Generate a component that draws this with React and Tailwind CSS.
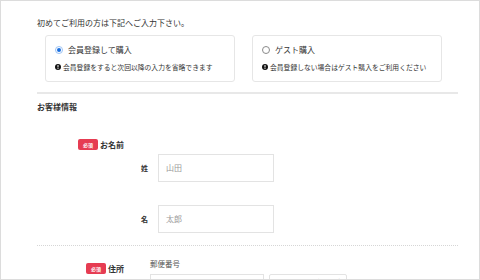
import React from 'react';

const InfoIcon = () => (
  <svg className="w-[6px] h-[6px] shrink-0" viewBox="0 0 12 12">
    <circle cx="6" cy="6" r="6" fill="#111" />
    <rect x="5" y="2.2" width="2" height="5" rx="0.6" fill="#fff" />
    <circle cx="6" cy="9.1" r="1.1" fill="#fff" />
  </svg>
);

const Radio = ({ checked }) => (
  <span
    className={`w-[8px] h-[8px] rounded-full shrink-0 flex items-center justify-center border ${
      checked ? 'border-[#9cc3f5] bg-white' : 'border-[#8a8a8a] bg-white'
    }`}
  >
    {checked && <span className="w-[4px] h-[4px] rounded-full bg-[#1a6fe0]" />}
  </span>
);

const Required = () => (
  <span className="w-[20px] h-[11px] rounded-[2px] bg-[#e63c52] text-white text-[5px] font-bold flex items-center justify-center leading-none">
    必須
  </span>
);

const PurchaseOption = ({ checked, label, note }) => (
  <div className="w-[190px] h-[47px] border border-[#e6e6e6] rounded-[3px] pl-[9px] pt-[9px]">
    <div className="flex items-center gap-[5px] h-[10px]">
      <Radio checked={checked} />
      <span className="text-[8px] leading-[10px]">{label}</span>
    </div>
    <div className="flex items-center gap-[2px] mt-[7px] h-[10px]">
      <InfoIcon />
      <span className="text-[6.8px] leading-[10px]">{note}</span>
    </div>
  </div>
);

const NameInput = ({ label, placeholder, className = '' }) => (
  <div className={`flex items-center ${className}`}>
    <span className="w-[8px] text-right text-[7px] font-bold leading-[10px]">{label}</span>
    <div className="ml-[10px] w-[116px] h-[28px] border border-[#e3e3e3] flex items-center pl-[7px] text-[8px] text-[#9a9a9a]">
      {placeholder}
    </div>
  </div>
);

export default function App() {
  return (
    <div className="w-[480px] h-[280px] overflow-hidden border border-[#dcdcdc] bg-white text-[#333] font-['Noto_Sans_CJK_JP',sans-serif]">
      <div className="pl-[36px] pr-[21px] pt-[16px]">
        <p className="text-[8px] leading-[12px]">初めてご利用の方は下記へご入力下さい。</p>

        <div className="mt-[6px] ml-[8px] flex gap-[17px]">
          <PurchaseOption checked label="会員登録して購入" note="会員登録をすると次回以降の入力を省略できます" />
          <PurchaseOption label="ゲスト購入" note="会員登録しない場合はゲスト購入をご利用ください" />
        </div>

        <div className="mt-[10px] h-[2px] bg-[#e8e8e8]" />

        <h3 className="mt-[7px] text-[8px] leading-[12px] font-bold">お客様情報</h3>

        {/* お名前 */}
        <div className="flex items-start">
          <div className="w-[87px] mt-[26px] flex justify-end items-center gap-[2px]">
            <Required />
            <span className="text-[8px] font-bold leading-[11px]">お名前</span>
          </div>
          <div className="pl-[16px] mt-[41px]">
            <NameInput label="姓" placeholder="山田" />
            <NameInput label="名" placeholder="太郎" className="mt-[23px]" />
          </div>
        </div>

        <div className="mt-[12px] border-t border-dotted border-[#d6d6d6]" />

        {/* 住所 */}
        <div className="flex items-start">
          <div className="w-[87px] mt-[17px] flex justify-end items-center gap-[2px]">
            <Required />
            <span className="text-[8px] font-bold leading-[11px]">住所</span>
          </div>
          <div className="ml-[26px] mt-[13px]">
            <p className="text-[7.5px] leading-[10px] text-[#555]">郵便番号</p>
            <div className="mt-[5px] flex gap-[5px]">
              <div className="w-[114px] h-[26px] border border-[#e3e3e3]" />
              <div className="w-[78px] h-[26px] border border-[#e3e3e3] rounded-[2px] flex justify-center pt-[2px] text-[7px] leading-[10px] text-[#888]">
                郵便番号から住所入力
              </div>
            </div>
          </div>
        </div>
      </div>
    </div>
  );
}
